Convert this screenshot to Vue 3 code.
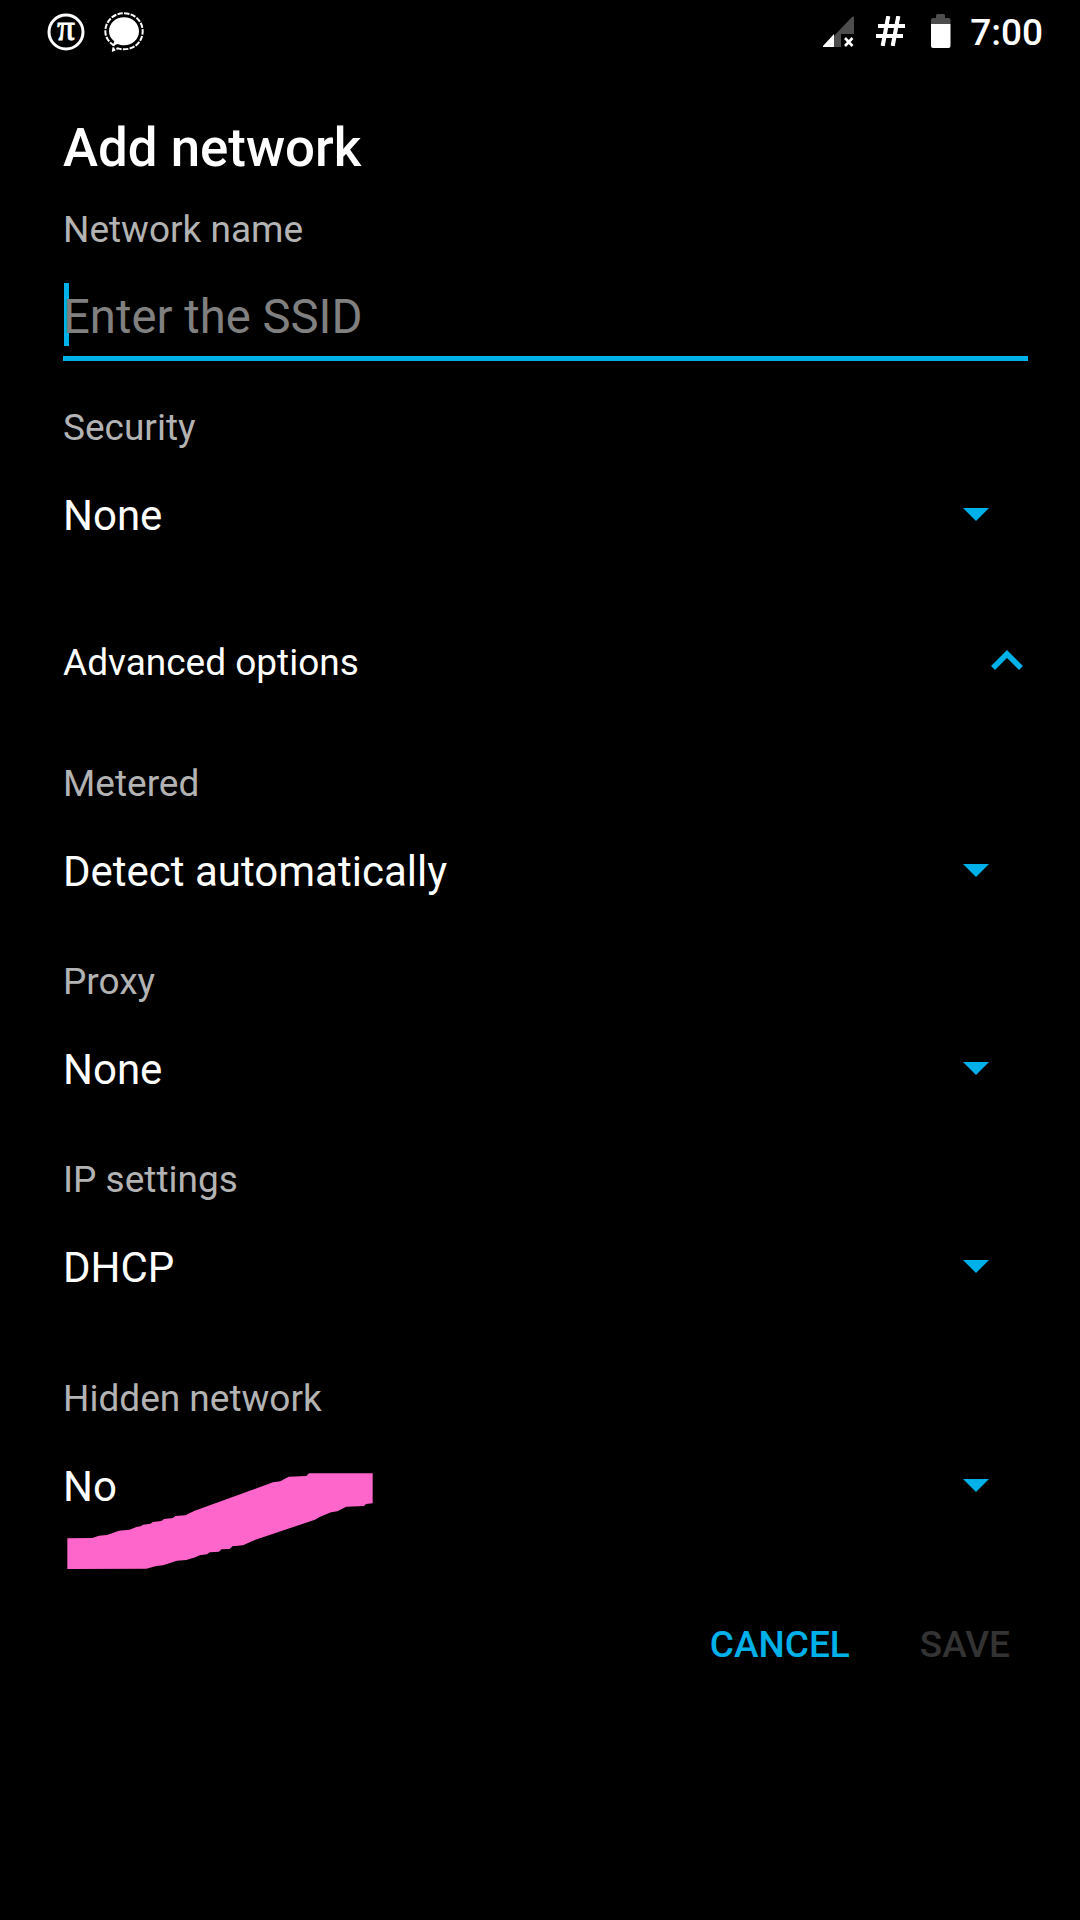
<script setup>
const advanced = [
  { label: 'Metered', value: 'Detect automatically' },
  { label: 'Proxy', value: 'None' },
  { label: 'IP settings', value: 'DHCP' },
]
</script>

<template>
  <div class="screen">
    <header class="status">
      <div class="group">
        <svg class="pi" width="38" height="38" viewBox="0 0 38 38">
          <circle cx="19" cy="19" r="17" fill="none" stroke="#fff" stroke-width="3" />
          <text x="19" y="26.500" text-anchor="middle" fill="#fff" stroke="#fff" stroke-width="1" font-family="'Liberation Serif', serif" font-size="35" textLength="17.500" lengthAdjust="spacingAndGlyphs">π</text>
        </svg>
        <svg width="40" height="40" viewBox="0 0 120 120">
          <path d="M60 16C85 16 105 34 105 58C105 82 85 100 60 100C53 100 46 98 41 96L26 101L31 88C21 81 15 71 15 58C15 34 35 16 60 16Z" fill="#fff" />
          <path d="M60 4C93 4 116 28 116 58C116 88 93 112 60 112C54 112 48 111 42 109L27 115L29 100C13 89 4 75 4 58C4 28 27 4 60 4Z" fill="none" stroke="#fff" stroke-width="6" stroke-dasharray="16 4" />
        </svg>
      </div>
      <div class="group right">
        <svg width="32" height="32" viewBox="0 0 32 32">
          <path d="M0.500 31L28.500 1.500Q31 -0.500 31 2V18H18V31Z" fill="#4d4d4d" />
          <path d="M0 31V30L11 18V31Z" fill="#fff" />
          <path d="M22 22L29.500 30M29.500 22L22 30" stroke="#fff" stroke-width="2.600" />
        </svg>
        <svg class="hash" width="29" height="30" viewBox="0 0 29 30">
          <path d="M12.300 0L6.700 30M22.300 0L16.700 30M2 10H29M0 20H27" stroke="#fff" stroke-width="4.100" fill="none" />
        </svg>
        <svg class="battery" width="20" height="34" viewBox="0 0 20 34">
          <path d="M0 10V6Q0 4 2 4H5V1.500Q5 0 6.500 0H12.500Q14 0 14 1.500V4H17.500Q19.500 4 19.500 6V10Z" fill="#4d4d4d" />
          <path d="M0 10H19.500V32Q19.500 34 17.500 34H2Q0 34 0 32Z" fill="#fff" />
        </svg>
        <span class="clock">7:00</span>
      </div>
    </header>

    <main class="form">
      <h1>Add network</h1>
      <div class="label">Network name</div>
      <div class="input"><i class="caret"></i><span>Enter the SSID</span></div>

      <div class="field">
        <div class="label">Security</div>
        <div class="value"><span>None</span><svg width="26" height="13" viewBox="0 0 26 13"><path d="M0 0H26L13 13Z" fill="#00b0e8" /></svg></div>
      </div>

      <div class="toggle">
        <span>Advanced options</span>
        <svg width="32" height="20" viewBox="0 0 32 20"><path d="M2 18L16 4L30 18" fill="none" stroke="#00b0e8" stroke-width="5.500" /></svg>
      </div>

      <div v-for="f in advanced" :key="f.label" class="field">
        <div class="label">{{ f.label }}</div>
        <div class="value"><span>{{ f.value }}</span><svg width="26" height="13" viewBox="0 0 26 13"><path d="M0 0H26L13 13Z" fill="#00b0e8" /></svg></div>
      </div>

      <div class="field hidden-net">
        <div class="label">Hidden network</div>
        <div class="value"><span>No</span><svg width="26" height="13" viewBox="0 0 26 13"><path d="M0 0H26L13 13Z" fill="#00b0e8" /></svg></div>
        <svg class="marker" width="306" height="96" viewBox="82 339 918 288">
          <path d="M83 535L158 534L178 527L202 525L238 512L270 509L290 501L303 499L310 494L332 491L340 486L365 483L373 477L400 474L407 468L437 466L465 452L700 367L722 364L747 350L800 348L808 340H999V430L979 432L973 438L920 440L893 454L874 457L840 471L826 479L640 542L610 556L578 559L570 567L545 568L538 575L510 577L502 583L480 586L467 592L440 600L412 602L370 616L350 618L320 626L83 627Z" fill="#ff66cc" />
        </svg>
      </div>

      <div class="actions">
        <span class="cancel">CANCEL</span>
        <span class="save">SAVE</span>
      </div>
    </main>
  </div>
</template>

<style>
body { margin: 0; background: #000; }
</style>

<style scoped>
.screen { width: 1080px; height: 1920px; background: #000; color: #fff; font-family: Roboto, sans-serif; overflow: hidden; }
.status { height: 63px; display: flex; justify-content: space-between; box-sizing: border-box; padding: 12px 37px 0 47px; }
.group { display: flex; align-items: flex-start; }
.pi { margin: 1px 19px 0 0; overflow: visible; }
.right svg { margin-top: 4px; }
.right .hash { margin-left: 21px; }
.right .battery { margin: 2px 19px 0 26px; }
.clock { font-size: 37px; font-weight: 500; line-height: 42px; }
.form { padding: 60px 52px 0 63px; }
h1 { margin: 0; font-size: 52.8px; font-weight: 500; line-height: 50px; }
.label { font-size: 37px; line-height: 50px; color: #b3b3b3; }
h1 + .label { margin-top: 32px; }
.input { position: relative; height: 105px; margin: 1px 0 42px; box-sizing: border-box; border-bottom: 5px solid #00b0e8; padding-top: 16px; font-size: 47.25px; line-height: 90px; color: #808080; }
.input span { position: relative; }
.caret { position: absolute; left: 1px; top: 27px; width: 5px; height: 63px; background: #00b0e8; }
.field { position: relative; margin-bottom: 60px; }
.value { display: flex; justify-content: space-between; align-items: center; margin-top: 38px; padding-right: 39.5px; font-size: 42px; line-height: 50px; }
.value svg { position: relative; top: -2px; }
.toggle { display: flex; justify-content: space-between; align-items: center; margin: 97px 0 71px; padding-right: 5.5px; font-size: 37px; line-height: 50px; }
.toggle svg { margin-top: -6px; }
.hidden-net { margin: 81px 0 0; }
.marker { position: absolute; left: 4px; top: 99px; }
.actions { display: flex; justify-content: flex-end; gap: 70px; margin-top: 108px; padding-right: 18px; font-size: 37px; font-weight: 500; line-height: 50px; }
.cancel { color: #00b0e8; }
.save { color: #333; }
</style>
